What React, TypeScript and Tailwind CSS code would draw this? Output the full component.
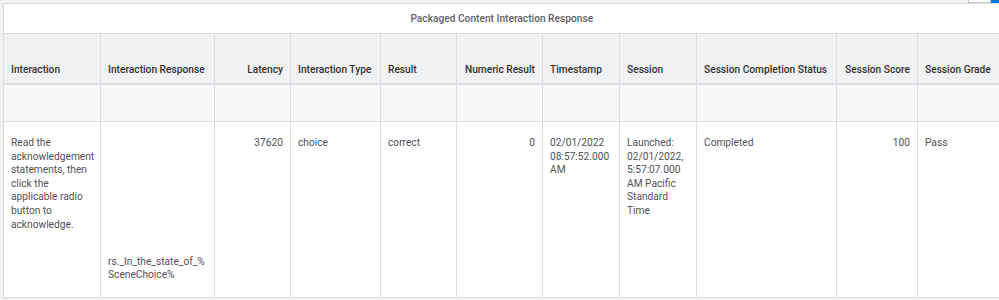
const columns = [
    { label: 'Interaction', width: 97, align: 'left' },
    { label: 'Interaction Response', width: 114, align: 'left' },
    { label: 'Latency', width: 76, align: 'right' },
    { label: 'Interaction Type', width: 90, align: 'left' },
    { label: 'Result', width: 76, align: 'left' },
    { label: 'Numeric Result', width: 86, align: 'right' },
    { label: 'Timestamp', width: 77, align: 'left' },
    { label: 'Session', width: 77, align: 'left' },
    { label: 'Session Completion Status', width: 140, align: 'left' },
    { label: 'Session Score', width: 81, align: 'right' },
    { label: 'Session Grade', width: 82, align: 'left' },
]

const row = [
    'Read the acknowledgement statements, then click the applicable radio button to acknowledge.',
    '',
    '37620',
    'choice',
    'correct',
    '0',
    '02/01/2022 08:57:52.000 AM',
    'Launched: 02/01/2022, 5:57:07.000 AM Pacific Standard Time',
    'Completed',
    '100',
    'Pass',
]

export default function App() {
    return (
        <div className="w-[999px] h-[300px] overflow-hidden bg-[#f0f1f2] pl-[3px] font-['Roboto','Liberation_Sans',sans-serif] text-[10.2px] leading-[13.6px]">
            {/* cut-off toolbar above the grid */}
            <div className="h-[3px] flex justify-end">
                <div className="w-[23px] h-[3px] bg-white border-x border-b border-[#c8c9cc]" />
                <div className="w-[8px] h-[3px] bg-[#0875e1]" />
            </div>

            <table className="table-fixed border-collapse w-[996px] border-l border-t border-[#dcdde0]">
                <colgroup>
                    {columns.map((c) => (
                        <col key={c.label} style={{ width: c.width }} />
                    ))}
                </colgroup>
                <thead>
                    <tr className="h-[30px] bg-white">
                        <th
                            colSpan={columns.length}
                            className="border-b border-[#dcdde0] text-center font-medium text-[#5e6066] align-middle"
                        >
                            Packaged Content Interaction Response
                        </th>
                    </tr>
                    <tr className="h-[50px] bg-[#f0f1f2]">
                        {columns.map((c, i) => (
                            <th
                                key={c.label}
                                className={
                                    'align-bottom pl-[7px] pr-[7px] pb-[6px] font-medium text-[#333333] whitespace-nowrap border-b-2 border-[#dcdde0] ' +
                                    (i < columns.length - 1 ? 'border-r ' : '') +
                                    (c.align === 'right' ? 'text-right' : 'text-left')
                                }
                            >
                                {c.label}
                            </th>
                        ))}
                    </tr>
                    <tr className="h-[38px] bg-[#f6f7f8]">
                        {columns.map((c, i) => (
                            <th
                                key={c.label}
                                className={'border-b border-[#dcdde0] ' + (i < columns.length - 1 ? 'border-r' : '')}
                            />
                        ))}
                    </tr>
                </thead>
                <tbody>
                    <tr className="h-[176px] bg-white text-[#4f5157]">
                        {row.map((value, i) => (
                            <td
                                key={i}
                                className={
                                    'align-top pl-[7px] pr-[7px] pt-[14px] border-b border-[#dcdde0] ' +
                                    (i < columns.length - 1 ? 'border-r ' : '') +
                                    (columns[i].align === 'right' ? 'text-right' : 'text-left')
                                }
                            >
                                {i === 1 ? (
                                    <div className="h-[148px] flex flex-col justify-end pb-[2px]">
                                        <span>rs._In_the_state_of_%</span>
                                        <span>SceneChoice%</span>
                                    </div>
                                ) : (
                                    value
                                )}
                            </td>
                        ))}
                    </tr>
                </tbody>
            </table>
        </div>
    )
}
